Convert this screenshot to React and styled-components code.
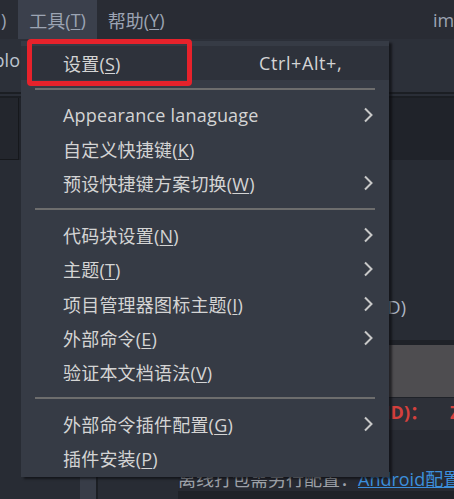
import React from "react";
import styled, { createGlobalStyle } from "styled-components";

const Global = createGlobalStyle`
  html, body { margin: 0; padding: 0; background: #282c34; }
  * { box-sizing: border-box; }
`;

const FONT = `"Open Sans", "Noto Sans CJK SC", sans-serif`;

const Window = styled.div`
  position: relative;
  width: 454px;
  height: 499px;
  overflow: hidden;
  display: flex;
  flex-direction: column;
  background: #282c34;
  font-family: ${FONT};
`;

/* ---------- top menu bar ---------- */
const MenuBar = styled.div`
  display: flex;
  height: 39px;
  flex-shrink: 0;
  background: #292c34;
  overflow: hidden;
`;

const MenuTitle = styled.div`
  display: flex;
  align-items: center;
  padding: ${(p) => (p.$clipped ? "0 12px 0 1px" : "0 11px")};
  font-size: 18px;
  color: #9ca4b3;
  white-space: nowrap;
  background: ${(p) => (p.$active ? "#3b404c" : "transparent")};
`;

const WindowTitle = styled.div`
  margin-left: auto;
  width: 21px;
  display: flex;
  align-items: center;
  overflow: hidden;
  white-space: nowrap;
  font-size: 18px;
  color: #9ca4b3;
`;

const U = styled.span`
  text-decoration: underline;
  text-decoration-thickness: 1px;
  text-underline-offset: 2px;
`;

/* ---------- tab strip / rules ---------- */
const TabStrip = styled.div`
  height: 53px;
  flex-shrink: 0;
  display: flex;
  align-items: flex-start;
  padding-top: 9px;
  background: #2c3039;
`;

const TabClip = styled.div`
  width: 20px;
  display: flex;
  justify-content: flex-end;
  overflow: hidden;
  white-space: nowrap;
  font-size: 18px;
  line-height: 24px;
  color: #bcc4cf;
`;

const DoubleRule = styled.div`
  height: 6px;
  flex-shrink: 0;
  background: #2a2e37;
  border-top: 2px solid #1b1e23;
  border-bottom: 2px solid #1b1e23;
`;

const Toolbar = styled.div`
  height: 62px;
  flex-shrink: 0;
  display: flex;
  background: #20232a;
`;

const ToolBox = styled.div`
  width: 19px;
  background: #23262d;
  border-right: 1px solid #16181c;
  border-bottom: 1px solid #16181c;
`;

/* ---------- workspace ---------- */
const Workspace = styled.div`
  flex: 1;
  display: flex;
  min-height: 0;
`;

const Sidebar = styled.div`
  width: 80px;
  background: #282c34;
`;

const ScrollTrack = styled.div`
  width: 16px;
  background: #383d48;
`;

const Divider = styled.div`
  width: 2px;
  background: #1c1f24;
`;

const Editor = styled.div`
  flex: 1;
  overflow: hidden;
  background: #282c34;
`;

const Doc = styled.div`
  margin-left: 80px;
  width: 420px;
  display: flex;
  flex-direction: column;
`;

const Intro = styled.div`
  height: 180px;
  padding-top: 135px;
`;

const IntroLine = styled.div`
  width: 228px;
  text-align: right;
  white-space: nowrap;
  font-size: 18px;
  line-height: 24px;
  color: #aeb6c2;
`;

const CodeBlock = styled.div`
  height: 58px;
  background: #4e4d50;
  border-top: 5px solid #1f2228;
  border-bottom: 1px solid #1f2228;
`;

const FieldRow = styled.div`
  height: 32px;
  display: flex;
  align-items: center;
  padding-bottom: 4px;
  background: #2d3038;
  font-size: 18px;
  font-weight: 700;
  line-height: 24px;
  color: #d5403d;
  white-space: nowrap;
`;

const FieldLabel = styled.span`
  width: 250px;
  text-align: right;
`;

const FieldValue = styled.span`
  margin-left: 22px;
`;

const Para = styled.div`
  height: 61px;
  padding-top: 37px;
  background: #272a32;
  font-size: 18px;
  line-height: 24px;
  color: #9da1a8;
  white-space: nowrap;
`;

const Link = styled.a`
  color: #3c8fdc;
  text-decoration: underline;
  text-decoration-thickness: 1px;
  text-underline-offset: 1px;
`;

const CodeStrip = styled.div`
  height: 20px;
  background: #1f2228;
`;

/* ---------- dropdown menu ---------- */
const Menu = styled.div`
  position: absolute;
  left: 21px;
  top: 41px;
  width: 368px;
  padding: 5px 0 2px;
  background: #363b45;
  box-shadow: 3px 2px 2px rgba(8, 9, 12, 0.6);
  font-size: 18px;
  color: #d4d4d4;
`;

const Row = styled.div`
  display: flex;
  align-items: center;
  height: 34.4px;
  padding: 0 16px 0 42px;
  white-space: nowrap;
  background: ${(p) => (p.$hover ? "#2e323b" : "transparent")};
`;

const Label = styled.span`
  width: 196px;
  flex-shrink: 0;
  letter-spacing: 0.2px;
`;

const Shortcut = styled.span`
  flex: 1;
  letter-spacing: 0.6px;
`;

const Arrow = styled.svg`
  width: 10px;
  height: 16px;
  flex-shrink: 0;
`;

const Separator = styled.div`
  height: 17px;
  display: flex;
  align-items: center;
  padding: 0 14px;
  &::after {
    content: "";
    flex: 1;
    height: 2px;
    background: #6d6d6d;
  }
`;

const Callout = styled.div`
  position: absolute;
  left: 27px;
  top: 39px;
  width: 165px;
  height: 47px;
  border: 5px solid #e6222b;
  border-radius: 4px;
  pointer-events: none;
`;

const Chevron = () => (
  <Arrow viewBox="0 0 10 16">
    <path d="M2 1.5 L8.5 8 L2 14.5" fill="none" stroke="#c8c8c8" strokeWidth="2" />
  </Arrow>
);

const Item = ({ text, k, shortcut, sub, hover }) => (
  <Row $hover={hover}>
    <Label>
      {text}
      {k && (
        <>
          (<U>{k}</U>)
        </>
      )}
    </Label>
    <Shortcut>{shortcut}</Shortcut>
    {sub && <Chevron />}
  </Row>
);

export default function App() {
  return (
    <>
      <Global />
      <Window>
        <MenuBar>
          <MenuTitle $clipped>)</MenuTitle>
          <MenuTitle $active>
            工具(<U>T</U>)
          </MenuTitle>
          <MenuTitle>
            帮助(<U>Y</U>)
          </MenuTitle>
          <WindowTitle>imgs - HBuilder X</WindowTitle>
        </MenuBar>
        <TabStrip>
          <TabClip>explo</TabClip>
        </TabStrip>
        <DoubleRule />
        <Toolbar>
          <ToolBox />
        </Toolbar>
        <Workspace>
          <Sidebar />
          <ScrollTrack />
          <Divider />
          <Editor>
            <Doc>
              <Intro>
                <IntroLine>打包配置(AppID)</IntroLine>
              </Intro>
              <CodeBlock />
              <FieldRow>
                <FieldLabel>应用标识(AppID)：</FieldLabel>
                <FieldValue>Z1A2B3C4</FieldValue>
              </FieldRow>
              <Para>
                离线打包需另行配置：<Link>Android配置</Link>
              </Para>
              <CodeStrip />
            </Doc>
          </Editor>
        </Workspace>

        <Menu>
          <Item text="设置" k="S" shortcut="Ctrl+Alt+," hover />
          <Separator />
          <Item text="Appearance lanaguage" sub />
          <Item text="自定义快捷键" k="K" />
          <Item text="预设快捷键方案切换" k="W" sub />
          <Separator />
          <Item text="代码块设置" k="N" sub />
          <Item text="主题" k="T" sub />
          <Item text="项目管理器图标主题" k="I" sub />
          <Item text="外部命令" k="E" sub />
          <Item text="验证本文档语法" k="V" />
          <Separator />
          <Item text="外部命令插件配置" k="G" sub />
          <Item text="插件安装" k="P" />
        </Menu>
        <Callout />
      </Window>
    </>
  );
}
